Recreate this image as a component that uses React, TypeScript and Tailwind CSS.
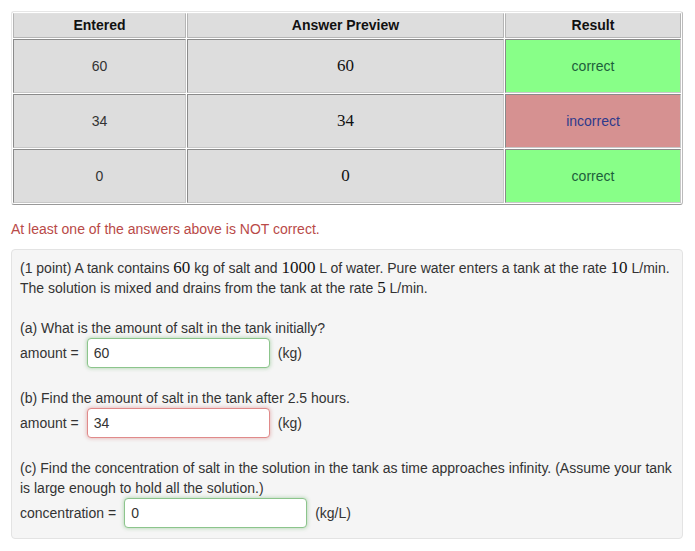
const rows = [
  { entered: "60", preview: "60", ok: true },
  { entered: "34", preview: "34", ok: false },
  { entered: "0", preview: "0", ok: true },
];

const math = "font-['Liberation_Serif',serif] text-[17px] leading-none";

function Num({ children }: { children: React.ReactNode }) {
  return <span className={`${math} text-[#111]`}>{children}</span>;
}

function AnswerRow({
  label,
  value,
  unit,
  ok,
}: {
  label: string;
  value: string;
  unit: string;
  ok: boolean;
}) {
  return (
    <div className="flex items-center h-[30px]">
      <span>{label}</span>
      <div
        className={`ml-[8px] h-[30px] w-[183px] rounded-[4px] border bg-white px-[6px] flex items-center ${
          ok
            ? "border-[#8cc58c] shadow-[0_0_4px_rgba(70,160,70,0.45)]"
            : "border-[#e08a8a] shadow-[0_0_4px_rgba(200,70,70,0.45)]"
        }`}
      >
        {value}
      </div>
      <span className="ml-[8px]">{unit}</span>
    </div>
  );
}

// cell borders only; background set per cell
const cell = "h-[54px] border border-[#8a8a8a] border-r-[#c8c8c8] border-b-[#c8c8c8]";
const head = "h-[25px] bg-[#dddddd] border border-[#b5b5b5] border-t-[#e0e0e0] font-bold text-[#111]";

export default function App() {
  return (
    <div className="bg-white min-h-[551px] px-[11px] pt-[11px] font-['Liberation_Sans',Arial,sans-serif] text-[14px] text-[#333]">
      <table className="w-[672px] border-separate border-spacing-[1px] border border-t-[#e6e6e6] border-l-[#e6e6e6] border-r-[#bbb] border-b-[#999] rounded-[3px] text-center">
        <thead>
          <tr>
            <th className={`w-[173px] ${head}`}>Entered</th>
            <th className={head}>Answer Preview</th>
            <th className={`w-[176px] ${head}`}>Result</th>
          </tr>
        </thead>
        <tbody>
          {rows.map((r) => (
            <tr key={r.entered}>
              <td className={`${cell} bg-[#dddddd]`}>{r.entered}</td>
              <td className={`${cell} bg-[#dddddd]`}>
                <Num>{r.preview}</Num>
              </td>
              {r.ok ? (
                <td className={`${cell} bg-[#88ff88] text-[#1d5e3a]`}>correct</td>
              ) : (
                <td className={`${cell} bg-[#d69191] text-[#2e3a8c]`}>incorrect</td>
              )}
            </tr>
          ))}
        </tbody>
      </table>

      <p className="mt-[14px] leading-[20px] text-[#b94a48]">
        At least one of the answers above is NOT correct.
      </p>

      <div className="mt-[10px] w-[672px] rounded-[4px] border border-[#e3e3e3] bg-[#f5f5f5] px-[8px] pt-[8px] pb-[10px] leading-[20px]">
        <p>
          (1 point) A tank contains <Num>60</Num> kg of salt and <Num>1000</Num> L of water.
          Pure water enters a tank at the rate <Num>10</Num> L/min. The solution is mixed and
          drains from the tank at the rate <Num>5</Num> L/min.
        </p>
        <p className="mt-[20px]">(a) What is the amount of salt in the tank initially?</p>
        <AnswerRow label="amount =" value="60" unit="(kg)" ok={true} />
        <p className="mt-[20px]">(b) Find the amount of salt in the tank after 2.5 hours.</p>
        <AnswerRow label="amount =" value="34" unit="(kg)" ok={false} />
        <p className="mt-[20px]">
          (c) Find the concentration of salt in the solution in the tank as time approaches
          infinity. (Assume your tank is large enough to hold all the solution.)
        </p>
        <AnswerRow label="concentration =" value="0" unit="(kg/L)" ok={true} />
      </div>
    </div>
  );
}
